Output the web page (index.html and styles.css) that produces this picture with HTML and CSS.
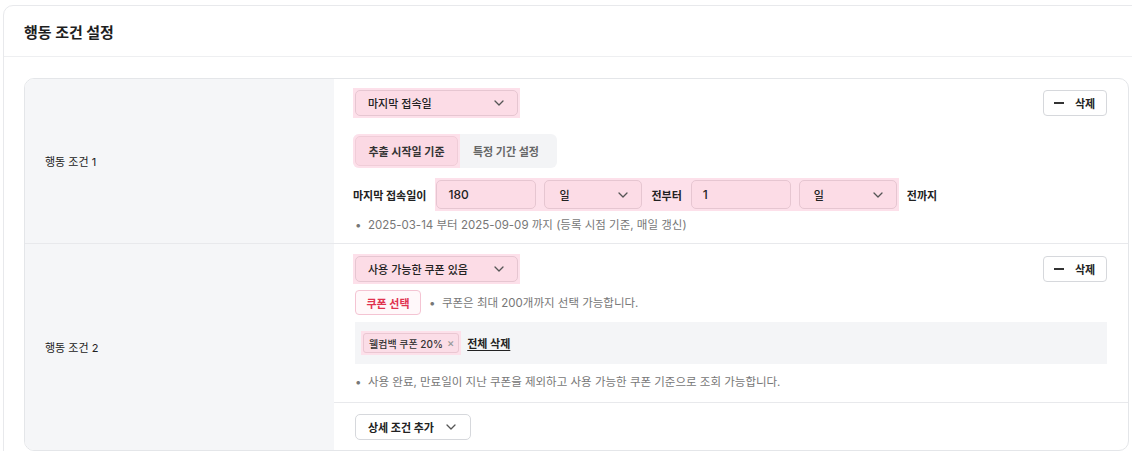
FILE: index.html
```html
<!DOCTYPE html>
<html lang="ko">
<head>
<meta charset="utf-8">
<title>행동 조건 설정</title>
<link rel="stylesheet" href="styles.css">
</head>
<body>
<section class="panel">
  <header class="panel-head"><h2 class="panel-title">행동 조건 설정</h2></header>
  <div class="panel-body">
    <div class="cond-table">
      <div class="cond-row row-1">
        <div class="cond-label">행동 조건 1</div>
        <div class="cond-content">
          <div class="line-top">
            <span class="hl"><button class="select sel-type">마지막 접속일<svg class="chev" viewBox="0 0 10 6"><polyline points="1,1 5,5 9,1"/></svg></button></span>
            <button class="btn-del"><span class="minus"></span>삭제</button>
          </div>
          <div class="segmented">
            <span class="hl seg-hl"><button class="seg seg-on">추출 시작일 기준</button></span>
            <button class="seg">특정 기간 설정</button>
          </div>
          <div class="range-line">
            <span class="range-label">마지막 접속일이</span>
            <span class="hl range-hl">
              <span class="input inp">180</span>
              <span class="select sel-unit">일<svg class="chev" viewBox="0 0 10 6"><polyline points="1,1 5,5 9,1"/></svg></span>
              <span class="range-word">전부터</span>
              <span class="input inp">1</span>
              <span class="select sel-unit">일<svg class="chev" viewBox="0 0 10 6"><polyline points="1,1 5,5 9,1"/></svg></span>
            </span>
            <span class="range-word">전까지</span>
          </div>
          <p class="hint hint-1">• &nbsp;2025-03-14 부터 2025-09-09 까지 (등록 시점 기준, 매일 갱신)</p>
        </div>
      </div>
      <div class="cond-row row-2">
        <div class="cond-label">행동 조건 2</div>
        <div class="cond-stack">
          <div class="cond-content content-2">
            <div class="line-top">
              <span class="hl"><button class="select sel-type">사용 가능한 쿠폰 있음<svg class="chev" viewBox="0 0 10 6"><polyline points="1,1 5,5 9,1"/></svg></button></span>
              <button class="btn-del"><span class="minus"></span>삭제</button>
            </div>
            <div class="coupon-line">
              <button class="btn-coupon">쿠폰 선택</button>
              <span class="hint inline-hint">• &nbsp;쿠폰은 최대 200개까지 선택 가능합니다.</span>
            </div>
            <div class="chip-box">
              <span class="hl chip-hl"><span class="chip">웰컴백 쿠폰 20%<span class="chip-x">×</span></span></span>
              <a class="clear-all">전체 삭제</a>
            </div>
            <p class="hint hint-2">• &nbsp;사용 완료, 만료일이 지난 쿠폰을 제외하고 사용 가능한 쿠폰 기준으로 조회 가능합니다.</p>
          </div>
          <div class="add-line">
            <button class="btn-add">상세 조건 추가<svg class="chev" viewBox="0 0 10 6"><polyline points="1,1 5,5 9,1"/></svg></button>
          </div>
        </div>
      </div>
    </div>
  </div>
</section>
</body>
</html>
```

FILE: styles.css
```css
* { box-sizing: border-box; }
html, body { margin: 0; background: #fff; overflow: hidden; }
body {
  font-family: "Inter", "Noto Sans CJK KR", "Noto Sans", sans-serif;
  color: #222;
  font-size: 11px;
}
button { font-family: inherit; color: inherit; }

.panel {
  margin: 5px 0 0 3px;
  width: 1160px;
  border: 1px solid #e8e9ec;
  border-radius: 10px;
  background: #fff;
}
.panel-head {
  height: 51px;
  padding-left: 20px;
  display: flex;
  align-items: center;
  border-bottom: 1px solid #eeeff1;
}
.panel-title { margin: 0; font-size: 15px; font-weight: 700; color: #1e1e1e; }
.panel-body { padding: 21px 20px; }

.cond-table {
  width: 1105px;
  border: 1px solid #e4e6e9;
  border-radius: 10px;
  overflow: hidden;
}
.cond-row { display: grid; grid-template-columns: 309px 1fr; }
.cond-row + .cond-row { border-top: 1px solid #e8e9ec; }
.row-1 { height: 164px; }
.cond-label {
  background: #f5f6f8;
  display: flex;
  align-items: center;
  padding-left: 20px;
  font-size: 11px;
  color: #222;
}
.cond-content { padding: 9px 21px 0 19px; display: flex; flex-direction: column; }

.line-top { display: flex; align-items: center; justify-content: space-between; }
.hl { background: #fde0ea; padding: 2px; display: inline-flex; align-items: center; }

.select {
  display: inline-flex;
  align-items: center;
  justify-content: space-between;
  height: 26px;
  border: 1px solid #e6c6d1;
  border-radius: 5px;
  background: #fcdce6;
  font-size: 11px;
  font-weight: 500;
  color: #222;
  padding: 0 13px 0 12px;
}
.sel-type { width: 163px; }
.chev { width: 10px; height: 6px; fill: none; stroke: #555; stroke-width: 1.3; stroke-linecap: round; stroke-linejoin: round; }

.btn-del {
  display: inline-flex;
  align-items: center;
  height: 26px;
  width: 64px;
  padding: 0 0 0 10px;
  border: 1px solid #d6d8dc;
  border-radius: 4px;
  background: #fff;
  font-size: 11px;
  font-weight: 700;
  color: #222;
}
.minus { width: 10px; height: 2px; background: #333; margin-right: 11px; }

.segmented {
  margin-top: 16px;
  width: 204px;
  height: 34px;
  display: flex;
  align-items: stretch;
  background: #f3f4f6;
  border-radius: 6px;
  overflow: hidden;
}
.seg-hl { padding: 2px; }
.seg {
  border: 0;
  background: transparent;
  font-size: 11px;
  font-weight: 700;
  color: #666;
  padding: 0 13px;
}
.seg-on {
  height: 100%;
  background: #fbd9e4;
  border: 1px solid #f0cdd8;
  border-radius: 5px;
  color: #333;
  padding: 0 11px;
  width: 103px;
}

.range-line { margin-top: 10px; display: flex; align-items: center; }
.range-label { font-weight: 700; margin-right: 9px; }
.range-hl { padding: 2px 2px 2px 1px; gap: 8px; }
.input {
  display: inline-flex;
  align-items: center;
  height: 29px;
  width: 100px;
  border: 1px solid #e6c6d1;
  border-radius: 5px;
  background: #fcdce6;
  padding-left: 11px;
  font-size: 12px;
  font-weight: 500;
}
.sel-unit { height: 29px; width: 98px; padding: 0 13px 0 14px; }
.range-word { font-weight: 700; margin: 0 1px; }
.range-hl + .range-word { margin-left: 8px; }

.hint { margin: 0; color: #777; font-size: 11.5px; line-height: 16px; }
.hint-1 { margin-top: 6px; padding-left: 2px; }

.cond-stack { display: flex; flex-direction: column; }
.content-2 { padding-top: 10px; padding-bottom: 12px; }
.coupon-line { margin-top: 6px; display: flex; align-items: center; }
.btn-coupon {
  height: 25px;
  width: 66px;
  border: 1px solid #f4c4d3;
  border-radius: 4px;
  background: #fff8fa;
  color: #e0334f;
  font-size: 11px;
  font-weight: 700;
  padding: 0;
  margin-left: 2px;
}
.inline-hint { margin-left: 8px; }

.chip-box {
  margin-top: 7px;
  margin-left: 2px;
  height: 42px;
  background: #f4f5f7;
  display: flex;
  align-items: center;
  padding-left: 6px;
}
.chip-hl { padding: 2px; }
.chip {
  display: inline-flex;
  align-items: center;
  height: 20px;
  padding: 0 4px 0 5px;
  border: 1px solid #eac7d2;
  border-radius: 3px;
  background: #fbdde7;
  font-size: 10px;
  font-weight: 500;
  color: #333;
}
.chip-x { color: #999; margin-left: 4px; font-size: 11px; }
.clear-all {
  margin-left: 6px;
  font-size: 11px;
  font-weight: 700;
  color: #222;
  text-decoration: underline;
  text-underline-offset: 2px;
}
.hint-2 { margin-top: 10px; padding-left: 2px; }

.add-line { border-top: 1px solid #e8e9ec; padding: 11px 0 10px 21px; }
.btn-add {
  display: inline-flex;
  align-items: center;
  gap: 12px;
  height: 26px;
  padding: 0 14px 0 12px;
  border: 1px solid #d6d8dc;
  border-radius: 5px;
  background: #fff;
  font-size: 11px;
  font-weight: 700;
  color: #222;
}
```
